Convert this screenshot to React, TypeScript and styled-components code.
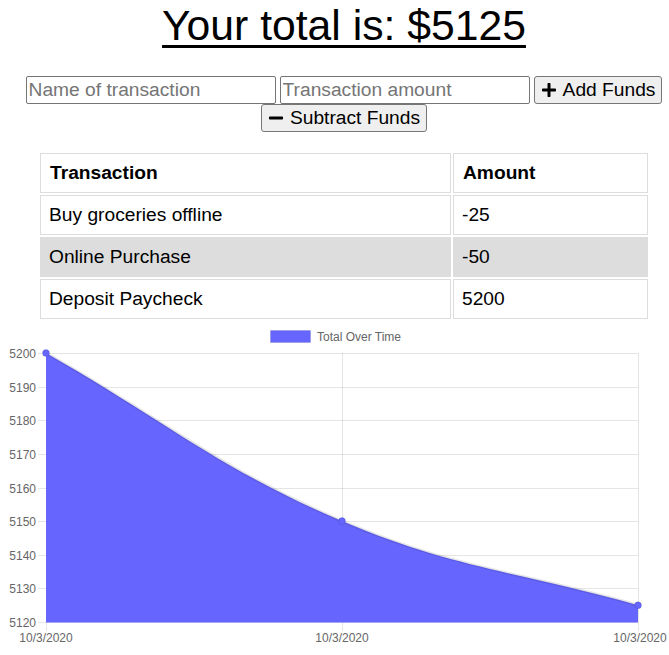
import React from "react";
import styled, { createGlobalStyle } from "styled-components";

const GlobalStyle = createGlobalStyle`
  html, body {
    margin: 0;
    padding: 0;
    background: #ffffff;
    overflow: hidden;
  }
  body {
    font-family: "Liberation Sans", Arial, sans-serif;
    font-size: 16px;
    color: #000;
  }
  *, *::before, *::after { box-sizing: border-box; }
`;

const Page = styled.div`
  width: 688px;
`;

const Title = styled.h1`
  margin: 0;
  padding-top: 1px;
  font-size: 42.7px;
  font-weight: 400;
  line-height: normal;
  text-align: center;
  text-decoration: underline;
  text-decoration-thickness: 3px;
  text-underline-offset: 5px;
`;

const Form = styled.form`
  margin: 26px auto 0;
  width: 680px;
  display: flex;
  flex-wrap: wrap;
  justify-content: center;
  column-gap: 4px;
  row-gap: 0;
`;

const TextInput = styled.input`
  width: 250px;
  height: 28px;
  padding: 1px 2px;
  border: 1px solid #767676;
  border-radius: 2px;
  font-family: "Liberation Sans", Arial, sans-serif;
  font-size: 19.2px;
  color: #000;
  background: #fff;
  &::placeholder { color: #757575; }
`;

const ActionButton = styled.button`
  height: 28px;
  display: inline-flex;
  align-items: center;
  gap: 7px;
  padding: 0 6px 0 7px;
  border: 1px solid #767676;
  border-radius: 3px;
  background: #efefef;
  font-family: "Liberation Sans", Arial, sans-serif;
  font-size: 19.2px;
  color: #000;
  line-height: 1;
`;

const IconSvg = styled.svg`
  width: 14px;
  height: 14px;
  flex: none;
`;

const Table = styled.table`
  margin: 19px auto 0;
  width: 612px;
  table-layout: fixed;
  border-collapse: separate;
  border-spacing: 2px;
  font-size: 19.2px;
`;

const HeadCell = styled.th<{ $wide?: boolean }>`
  width: ${(p) => (p.$wide ? "411px" : "auto")};
  border: 1px solid #dddddd;
  padding: 8px 8px 8px 9px;
  line-height: 22px;
  text-align: left;
  font-weight: 700;
`;

const Row = styled.tr<{ $shaded?: boolean }>`
  background: ${(p) => (p.$shaded ? "#dddddd" : "transparent")};
`;

const Cell = styled.td`
  border: 1px solid #dddddd;
  padding: 8px;
  line-height: 22px;
`;

const ChartBox = styled.div`
  width: 669px;
  height: 334px;
`;

const ChartSvg = styled.svg`
  display: block;
  font-family: "Liberation Sans", Arial, sans-serif;
`;

const PlusIcon = () => (
  <IconSvg viewBox="0 32 448 448" aria-hidden="true">
    <path
      fill="#000"
      d="M416 208H272V64c0-17.670-14.330-32-32-32h-32c-17.670 0-32 14.330-32 32v144H32c-17.670 0-32 14.330-32 32v32c0 17.670 14.330 32 32 32h144v144c0 17.670 14.330 32 32 32h32c17.670 0 32-14.330 32-32V304h144c17.670 0 32-14.330 32-32v-32c0-17.670-14.330-32-32-32z"
    />
  </IconSvg>
);

const MinusIcon = () => (
  <IconSvg viewBox="0 32 448 448" aria-hidden="true">
    <path
      fill="#000"
      d="M416 208H32c-17.670 0-32 14.330-32 32v32c0 17.670 14.330 32 32 32h384c17.670 0 32-14.330 32-32v-32c0-17.670-14.330-32-32-32z"
    />
  </IconSvg>
);

const transactions = [
  { name: "Buy groceries offline", value: "-25" },
  { name: "Online Purchase", value: "-50" },
  { name: "Deposit Paycheck", value: "5200" },
];

const Chart = () => {
  const left = 46;
  const right = 638;
  const top = 32;
  const bottom = 301;
  const step = (bottom - top) / 8;
  const yLabels = [5200, 5190, 5180, 5170, 5160, 5150, 5140, 5130, 5120];
  const xs = [left, 342, right];
  const curve =
    "M46,32 C164.4,99.2 217.6,147.1 342,200.1 C454.4,248 519.6,250.6 638,284.2";
  const grid = "rgba(0,0,0,0.1)";
  return (
    <ChartSvg width={669} height={334} viewBox="0 0 669 334">
      <rect x={270.5} y={9.5} width={40} height={12} fill="#6666ff" stroke={grid} strokeWidth={1} />
      <text x={317} y={19.5} fontSize={12} fill="#666">
        Total Over Time
      </text>
      {yLabels.map((v, i) => {
        const y = Math.round(top + i * step) + 0.5;
        return (
          <g key={v}>
            <line x1={38} x2={right} y1={y} y2={y} stroke={grid} strokeWidth={1} />
            <text x={36} y={y + 4} fontSize={12} fill="#666" textAnchor="end">
              {v}
            </text>
          </g>
        );
      })}
      {xs.map((x, i) => (
        <g key={i}>
          <line x1={x + 0.5} x2={x + 0.5} y1={top} y2={bottom + 9} stroke={grid} strokeWidth={1} />
          <text x={i === 2 ? x + 2 : x} y={321} fontSize={12} fill="#666" textAnchor="middle">
            10/3/2020
          </text>
        </g>
      ))}
      <path d={`${curve} L638,301.5 L46,301.5 Z`} fill="#6666ff" />
      <path d={curve} fill="none" stroke={grid} strokeWidth={3} />
      {[
        [46, 32],
        [342, 200.1],
        [638, 284.2],
      ].map(([x, y], i) => (
        <circle key={i} cx={x} cy={y} r={3.5} fill="#6666ff" stroke={grid} strokeWidth={1} />
      ))}
    </ChartSvg>
  );
};

export default function App() {
  return (
    <>
      <GlobalStyle />
      <Page>
        <Title>Your total is: $5125</Title>
        <Form onSubmit={(e) => e.preventDefault()}>
          <TextInput type="text" placeholder="Name of transaction" />
          <TextInput type="number" placeholder="Transaction amount" />
          <ActionButton type="button">
            <PlusIcon />
            Add Funds
          </ActionButton>
          <ActionButton type="button">
            <MinusIcon />
            Subtract Funds
          </ActionButton>
        </Form>
        <Table>
          <thead>
            <tr>
              <HeadCell $wide>Transaction</HeadCell>
              <HeadCell>Amount</HeadCell>
            </tr>
          </thead>
          <tbody>
            {transactions.map((t, i) => (
              <Row key={t.name} $shaded={i % 2 === 1}>
                <Cell>{t.name}</Cell>
                <Cell>{t.value}</Cell>
              </Row>
            ))}
          </tbody>
        </Table>
        <ChartBox>
          <Chart />
        </ChartBox>
      </Page>
    </>
  );
}
